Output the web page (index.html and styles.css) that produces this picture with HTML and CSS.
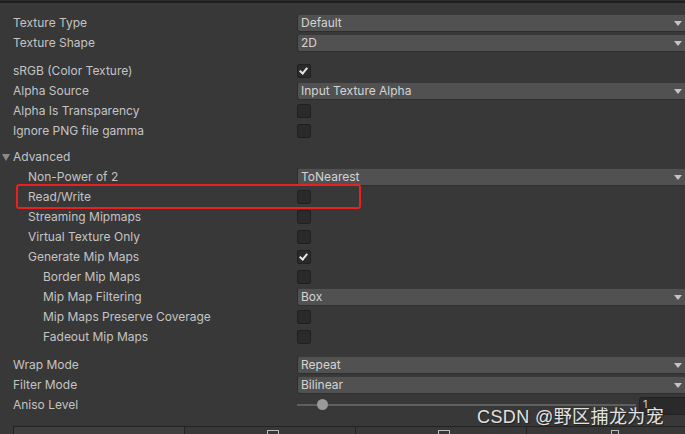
FILE: index.html
```html
<!DOCTYPE html>
<html>
<head>
<meta charset="utf-8">
<link rel="stylesheet" href="styles.css">
</head>
<body>
<div class="topline"></div>
<div class="panel">
  <div class="group">
    <div class="row"><span class="label">Texture Type</span><div class="dropdown">Default<span class="arrow"></span></div></div>
    <div class="row"><span class="label">Texture Shape</span><div class="dropdown">2D<span class="arrow"></span></div></div>
  </div>
  <div class="group">
    <div class="row"><span class="label">sRGB (Color Texture)</span><span class="check on"></span></div>
    <div class="row"><span class="label">Alpha Source</span><div class="dropdown">Input Texture Alpha<span class="arrow"></span></div></div>
    <div class="row"><span class="label">Alpha Is Transparency</span><span class="check"></span></div>
    <div class="row"><span class="label">Ignore PNG file gamma</span><span class="check"></span></div>
  </div>
  <div class="group adv">
    <div class="row"><span class="label foldout"><span class="tri"></span>Advanced</span></div>
    <div class="row"><span class="label l1">Non-Power of 2</span><div class="dropdown">ToNearest<span class="arrow"></span></div></div>
    <div class="row highlight"><span class="label l1">Read/Write</span><span class="check"></span><span class="redbox"></span></div>
    <div class="row"><span class="label l1">Streaming Mipmaps</span><span class="check"></span></div>
    <div class="row"><span class="label l1">Virtual Texture Only</span><span class="check"></span></div>
    <div class="row"><span class="label l1">Generate Mip Maps</span><span class="check on"></span></div>
    <div class="row"><span class="label l2">Border Mip Maps</span><span class="check"></span></div>
    <div class="row"><span class="label l2">Mip Map Filtering</span><div class="dropdown">Box<span class="arrow"></span></div></div>
    <div class="row"><span class="label l2">Mip Maps Preserve Coverage</span><span class="check"></span></div>
    <div class="row"><span class="label l2">Fadeout Mip Maps</span><span class="check"></span></div>
  </div>
  <div class="group">
    <div class="row"><span class="label">Wrap Mode</span><div class="dropdown">Repeat<span class="arrow"></span></div></div>
    <div class="row"><span class="label">Filter Mode</span><div class="dropdown">Bilinear<span class="arrow"></span></div></div>
    <div class="row"><span class="label">Aniso Level</span>
      <div class="slider">
        <div class="track"><span class="knob"></span></div>
        <div class="numfield">1</div>
      </div>
    </div>
  </div>
</div>
<div class="tabs">
  <div class="tab first"></div>
  <div class="tab"><span class="ticon"></span></div>
  <div class="tab"><span class="ticon"></span></div>
  <div class="tab"><span class="ticon small"></span></div>
</div>
<div class="watermark">CSDN @野区捕龙为宠</div>
</body>
</html>
```

FILE: styles.css
```css
html, body {
  margin: 0;
  padding: 0;
  width: 685px;
  height: 434px;
  overflow: hidden;
  background: #383838;
  font-family: Inter, "Noto Sans", sans-serif;
  font-size: 12px;
  color: #c4c4c4;
  position: relative;
}
.topline {
  height: 2px;
  background: #1f1f1f;
  border-top: 1px solid #2c2c2c;
}
.panel {
  width: 692px;
  padding-top: 10px;
  display: flex;
  flex-direction: column;
}
.group {
  display: flex;
  flex-direction: column;
  margin-bottom: 8px;
}
.group.adv { margin-top: -2px; }
.row {
  height: 20px;
  display: flex;
  align-items: center;
  position: relative;
}
.label {
  width: 284px;
  padding-left: 13px;
  flex: none;
  white-space: nowrap;
  line-height: 20px;
}
.label.l1 { padding-left: 28px; width: 269px; }
.label.l2 { padding-left: 43px; width: 254px; }
.label.foldout {
  padding-left: 2px;
  width: 295px;
  display: flex;
  align-items: center;
}
.tri {
  width: 0; height: 0;
  border-left: 4px solid transparent;
  border-right: 4px solid transparent;
  border-top: 7px solid #8a8a8a;
  margin-right: 3px;
}
.dropdown {
  flex: 1;
  height: 16px;
  line-height: 16px;
  background: #515151;
  border: 1px solid #2e2e2e;
  border-top-color: #3a3a3a;
  border-radius: 3px;
  padding-left: 3px;
  color: #d4d4d4;
  position: relative;
}
.arrow {
  position: absolute;
  right: 9px;
  top: 6px;
  width: 0; height: 0;
  border-left: 4px solid transparent;
  border-right: 4px solid transparent;
  border-top: 5px solid #c4c4c4;
}
.check {
  width: 12px;
  height: 12px;
  background: #2a2a2a;
  border: 1px solid #202020;
  border-radius: 2px;
  position: relative;
}
.check.on::after {
  content: "";
  position: absolute;
  left: 3px;
  top: 1px;
  width: 3px;
  height: 6px;
  border-right: 2px solid #e6e6e6;
  border-bottom: 2px solid #e6e6e6;
  transform: rotate(40deg);
}
.redbox {
  position: absolute;
  left: 16px;
  top: -3px;
  width: 341px;
  height: 21px;
  border: 2px solid #e8221f;
  border-radius: 3px;
}
.slider {
  flex: 1;
  display: flex;
  align-items: center;
  height: 20px;
}
.track {
  flex: 1;
  height: 2px;
  background: #5e5e5e;
  position: relative;
  margin-right: 3px;
}
.knob {
  position: absolute;
  left: 20px;
  top: -5px;
  width: 11px;
  height: 11px;
  border-radius: 50%;
  background: #9a9a9a;
}
.numfield {
  width: 48px;
  height: 16px;
  background: #2a2a2a;
  border: 1px solid #222;
  border-radius: 3px;
  font-size: 11px;
  line-height: 12px;
  padding-left: 3px;
  color: #d0d0d0;
  margin-top: 2px;
}
.tabs {
  position: absolute;
  left: 13px;
  top: 426px;
  width: 690px;
  height: 10px;
  display: flex;
  border-top: 1px solid #232323;
}
.tab {
  width: 170px;
  flex: none;
  border-left: 1px solid #232323;
  background: #383838;
  position: relative;
}
.tab.first { background: #3f3f3f; }
.ticon {
  position: absolute;
  left: 82px;
  top: 3px;
  width: 10px;
  height: 6px;
  border: 1px solid #bdbdbd;
  border-bottom: none;
}
.ticon.small { width: 6px; left: 84px; }
.watermark {
  position: absolute;
  left: 477px;
  top: 402px;
  font-family: "Liberation Sans", "Noto Sans CJK SC", sans-serif;
  font-size: 18px;
  color: #e2e2e2;
  text-shadow: 1px 1px 1px #202020;
  white-space: nowrap;
  letter-spacing: 0.4px;
}
```
